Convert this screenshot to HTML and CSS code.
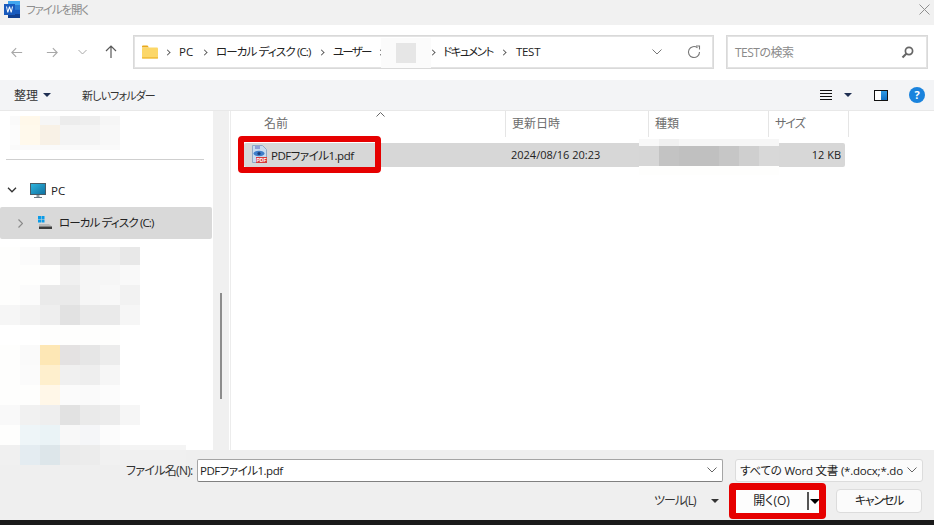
FILE: index.html
```html
<!DOCTYPE html>
<html lang="ja">
<head>
<meta charset="utf-8">
<title>ファイルを開く</title>
<link rel="stylesheet" href="styles.css">
</head>
<body>
<div class="dialog">
  <header class="titlebar">
    <svg class="word" width="16" height="17" viewBox="0 0 16 17">
      <rect x="4" y="0" width="12" height="17" fill="#41a5ee"/>
      <rect x="4" y="4" width="12" height="4.500" fill="#2b7cd3"/>
      <rect x="4" y="8.500" width="12" height="4.500" fill="#185abd"/>
      <rect x="4" y="13" width="12" height="4" fill="#103f91"/>
      <rect x="0" y="3" width="11" height="11" fill="#185abd"/>
      <path d="M2 5.500l1.300 6h1l1.200-4 1.200 4h1l1.300-6h-1l-.8 4-1.200-4h-1l-1.200 4-.8-4z" fill="#fff"/>
    </svg>
    <span class="title">ファイルを開く</span>
    <svg class="close" width="11" height="11" viewBox="0 0 11 11"><path d="M.5.500l10 10M10.500.500l-10 10" stroke="#8f8f8f" fill="none"/></svg>
  </header>

  <nav class="addressrow">
    <svg class="nav nav-back" width="12" height="11" viewBox="0 0 14 12"><path d="M13 6H1M6 1L1 6l5 5" stroke="#a8a8a8" stroke-width="1.300" fill="none"/></svg>
    <svg class="nav nav-fwd" width="12" height="11" viewBox="0 0 14 12"><path d="M1 6h12M8 1l5 5-5 5" stroke="#a8a8a8" stroke-width="1.300" fill="none"/></svg>
    <svg class="nav nav-down" width="9" height="6" viewBox="0 0 9 6"><path d="M.5 1l4 4 4-4" stroke="#a8a8a8" fill="none"/></svg>
    <svg class="nav nav-up" width="12" height="14" viewBox="0 0 12 14"><path d="M6 13V1M1 6l5-5 5 5" stroke="#5a5a5a" stroke-width="1.200" fill="none"/></svg>
    <div class="address">
      <svg class="folder" width="16" height="14" viewBox="0 0 16 14">
        <path d="M0 1.500A1 1 0 0 1 1 .500h4.500l1.500 2H0z" fill="#e9a91c"/>
        <rect x="0" y="2.500" width="16" height="11" rx="1" fill="#fcd768"/>
        <rect x="0" y="12.300" width="16" height="1.200" fill="#eeb52e"/>
      </svg>
      <span class="crumb-sep"></span><span class="crumb c-pc">PC</span>
      <span class="crumb-sep"></span><span class="crumb c-disk">ローカル ディスク (C:)</span>
      <span class="crumb-sep"></span><span class="crumb c-user">ユーザー</span>
      <span class="crumb-sep"></span><span class="crumb-gap"></span>
      <span class="crumb-sep"></span><span class="crumb c-doc">ドキュメント</span>
      <span class="crumb-sep"></span><span class="crumb c-test">TEST</span>
      <svg class="addr-drop" width="10" height="6" viewBox="0 0 10 6"><path d="M.5.500L5 5 9.500.500" stroke="#777" fill="none"/></svg>
      <svg class="refresh" width="14" height="14" viewBox="0 0 14 14"><path d="M12.500 7A5.500 5.500 0 1 1 10.500 2.800" stroke="#777" stroke-width="1.100" fill="none"/><path d="M9 .500h3.500V4" stroke="#777" stroke-width="1.100" fill="none" transform="translate(0 .5)"/></svg>
    </div>
    <div class="search">
      <span class="search-text">TESTの検索</span>
      <svg width="13" height="13" viewBox="0 0 13 13"><circle cx="8" cy="5" r="3.600" stroke="#666" stroke-width="1.700" fill="none"/><path d="M5.500 7.500L1.500 11.500" stroke="#666" stroke-width="2.200"/></svg>
    </div>
  </nav>

  <div class="toolbar">
    <span class="tool tool-org">整理</span>
    <span class="arrow arrow-navy"></span>
    <span class="tool tool-new">新しいフォルダー</span>
    <svg class="viewicon" width="12" height="10" viewBox="0 0 12 10"><path d="M0 .500h12M0 3.500h12M0 6.500h12M0 9.500h12" stroke="#111"/></svg>
    <span class="arrow arrow-navy arrow-view"></span>
    <span class="pane"><span class="pane-blue"></span></span>
    <span class="help">?</span>
  </div>

  <main class="content">
    <aside class="sidebar">
      <div class="side-top"><div class="divider"></div></div>
      <div class="tree-pc">
        <svg width="10" height="6" viewBox="0 0 10 6"><path d="M1 .800l4 4 4-4" stroke="#333" stroke-width="1.300" fill="none"/></svg>
        <svg class="monitor" width="16" height="15" viewBox="0 0 16 15"><defs><linearGradient id="scr" x1="0" y1="0" x2="1" y2="1"><stop offset="0" stop-color="#2fb7e0"/><stop offset="1" stop-color="#0f6f9f"/></linearGradient></defs><rect x=".5" y=".5" width="15" height="11" fill="url(#scr)" stroke="#4b5c66"/><rect x="6.500" y="12" width="3" height="2" fill="#8f9aa1"/><rect x="4" y="14" width="8" height="1" fill="#6b7780"/></svg>
        <span>PC</span>
      </div>
      <div class="tree-disk">
        <svg width="5" height="9" viewBox="0 0 5 9"><path d="M.5.500l4 4-4 4" stroke="#8a8a8a" stroke-width="1.200" fill="none"/></svg>
        <svg class="drive" width="15" height="13" viewBox="0 0 15 13"><rect x="0" y="0" width="3" height="3" fill="#0a9be8"/><rect x="3.500" y="0" width="3" height="3" fill="#0a9be8"/><rect x="0" y="3.500" width="3" height="3" fill="#0a9be8"/><rect x="3.500" y="3.500" width="3" height="3" fill="#0a9be8"/><path d="M1 8h10l3 2.500H1z" fill="#b9b9b9"/><rect x="1" y="10.500" width="13" height="2.500" fill="#3c3c3c"/></svg>
        <span class="disk-label">ローカル ディスク (C:)</span>
      </div>
    </aside>
    <div class="scrolltrack"><div class="thumb"></div></div>
    <section class="files">
      <div class="headers">
        <span class="col col-name">名前<svg class="sort" width="9" height="5" viewBox="0 0 9 5"><path d="M.5 4.500l4-4 4 4" stroke="#666" fill="none"/></svg></span>
        <span class="col col-date">更新日時</span>
        <span class="col col-type">種類</span>
        <span class="col col-size">サイズ</span>
      </div>
      <div class="filerow">
        <span class="cell cell-name">
          <svg class="pdficon" width="15" height="18" viewBox="0 0 15 18">
            <path d="M.5.500h10l4 4V17.500H.5z" fill="#c8dcef" stroke="#8fa9c6"/>
            <rect x="3" y="1" width="5" height="3" fill="#8e9fd6"/>
            <ellipse cx="7" cy="8.500" rx="5.500" ry="2.800" fill="#3f7ec9"/>
            <circle cx="7" cy="8.500" r="1.600" fill="#1d3f78"/>
            <rect x="4" y="12" width="11" height="6" fill="#d93a3a"/>
            <text x="9.500" y="16.700" class="pdftag" text-anchor="middle">PDF</text>
          </svg>
          <span class="file-label">PDFファイル1.pdf</span>
        </span>
        <span class="cell cell-date">2024/08/16 20:23</span>
        <span class="cell cell-type"></span>
        <span class="cell cell-size">12 KB</span>
      </div>
    </section>
  </main>

  <footer class="footer">
    <div class="frow frow-top">
      <label class="fname-label">ファイル名(N):</label>
      <div class="fname">
        <span class="file-label">PDFファイル1.pdf</span>
        <svg width="10" height="6" viewBox="0 0 10 6"><path d="M.5.500L5 5 9.500.500" stroke="#666" fill="none"/></svg>
      </div>
      <div class="ftype">
        <span>すべての Word 文書 (*.docx;*.do</span>
        <svg width="10" height="6" viewBox="0 0 10 6"><path d="M.5.500L5 5 9.500.500" stroke="#666" fill="none"/></svg>
      </div>
    </div>
    <div class="frow frow-bottom">
      <span class="tools">ツール(L)</span>
      <span class="arrow arrow-dark arrow-tools"></span>
      <div class="openbtn">
        <span class="open-label">開く(O)</span>
        <span class="open-split"></span>
        <span class="arrow arrow-black"></span>
      </div>
      <button class="cancel" type="button">キャンセル</button>
    </div>
  </footer>
  <div class="blackbar"></div>

  <div class="hl hl-file"></div>

  <div class="mosaic m-side1">
    <i class="fa"></i><i class="y4"></i><i class="f6"></i><i class="ec"></i><i class="ee"></i><i class="f6"></i>
    <i class="tall fc"></i><i class="tall y5"></i><i class="tall y6"></i><i class="tall f4"></i><i class="tall f4"></i><i class="tall f8"></i>
    <i class="low fa"></i><i class="low fa"></i><i class="low fa"></i><i class="low fa"></i><i class="low fa"></i><i class="low fa"></i>
  </div>

  <div class="mosaic m-side2">
    <i class="fe"></i><i class="fb"></i><i class="e8"></i><i class="dc"></i><i class="ea"></i><i class="ee"></i><i class="e8"></i>
    <i class="fe"></i><i class="fe"></i><i class="fe"></i><i class="f0"></i><i class="f6"></i><i class="f6"></i><i class="f9"></i>
    <i class="fe"></i><i class="fb"></i><i class="ea"></i><i class="ea"></i><i class="f6"></i><i class="f8"></i><i class="f2"></i>
    <i class="f6"></i><i class="f2"></i><i class="ee"></i><i class="e2"></i><i class="ea"></i><i class="ea"></i><i class="f6"></i>
    <i class="ff"></i><i class="ff"></i><i class="fe"></i><i class="fe"></i><i class="fe"></i><i class="fe"></i><i class="ff"></i>
    <i class="fe"></i><i class="fa"></i><i class="y1"></i><i class="e4"></i><i class="e6"></i><i class="ec"></i><i class="ff"></i>
    <i class="fe"></i><i class="fb"></i><i class="y2"></i><i class="f0"></i><i class="ee"></i><i class="f6"></i><i class="ff"></i>
    <i class="fe"></i><i class="fe"></i><i class="y3"></i><i class="fb"></i><i class="fa"></i><i class="fc"></i><i class="ff"></i>
    <i class="f9"></i><i class="f1"></i><i class="ee"></i><i class="e2"></i><i class="ea"></i><i class="ec"></i><i class="f6"></i>
    <i class="fe"></i><i class="b1"></i><i class="b2"></i><i class="f8"></i><i class="b3"></i><i class="fc"></i><i class="ff"></i>
  </div>
  <div class="m-foot">
    <i class="f0"></i><i class="b4"></i><i class="b5"></i><i class="eb"></i><i class="ec"></i><i class="f1"></i>
  </div>

  <div class="m-crumb"><span></span></div>

  <div class="m-type">
    <i class="f8"></i><i class="f0"></i><i class="f6"></i><i class="f6"></i><i class="f6"></i><i class="f6"></i><i class="f6"></i>
    <i class="d6"></i><i class="c3"></i><i class="c1"></i><i class="c1"></i><i class="c6"></i><i class="cf"></i><i class="d8"></i>
    <i class="fe"></i><i class="fe"></i><i class="fe"></i><i class="fe"></i><i class="fe"></i><i class="fe"></i><i class="fe"></i>
  </div>

  <div class="hl hl-open"></div>
</div>
</body>
</html>
```

FILE: styles.css
```css
* { box-sizing: border-box; }
html, body { margin: 0; padding: 0; }
body {
  width: 934px;
  height: 525px;
  overflow: hidden;
  font-family: "Open Sans", "Noto Sans CJK JP", sans-serif;
  font-size: 12px;
  color: #222;
  font-feature-settings: "palt";
}
.dialog {
  position: relative;
  width: 934px;
  height: 525px;
  display: flex;
  flex-direction: column;
  background: #fff;
  overflow: hidden;
}

/* title bar */
.titlebar {
  height: 25px;
  flex: none;
  display: flex;
  align-items: flex-start;
  background: #f1f1f1;
  padding: 1px 4px 0 4px;
}
.title { margin: 1px 0 0 6px; color: #8e8e8e; font-size: 11.500px; letter-spacing: -1.100px; line-height: 16px; }
.close { margin: 3px 0 0 auto; }

/* address row */
.addressrow {
  height: 55px;
  flex: none;
  display: flex;
  align-items: center;
  background: #fff;
  padding: 0 6px 1px 0;
}
.nav { flex: none; }
.nav-back { margin-left: 11px; }
.nav-fwd { margin-left: 23px; }
.nav-down { margin-left: 20px; }
.nav-up { margin-left: 18px; }
.address {
  width: 581px;
  height: 34px;
  margin-left: 16px;
  border: 1px solid #d9d9d9;
  outline: 1px solid #e3e3e3;
  outline-offset: -2px;
  display: flex;
  align-items: center;
  padding-left: 8px;
  flex: none;
}
.folder { flex: none; margin-right: 7px; }
.crumb-sep {
  flex: none;
  width: 5px;
  height: 5px;
  border-top: 1px solid #444;
  border-right: 1px solid #444;
  transform: rotate(45deg) scale(.85);
}
.crumb { white-space: nowrap; color: #222; font-size: 11.500px; flex: none; margin: 0 9px 2px; }
.c-pc { width: 14px; }
.c-disk { width: 94px; letter-spacing: -.85px; }
.c-user { width: 36px; letter-spacing: -1.800px; }
.crumb-gap { width: 47px; flex: none; }
.c-doc { width: 50px; margin: 0 8px 2px; letter-spacing: -1.500px; }
.c-test { margin-left: 10px; letter-spacing: -.3px; }
.addr-drop { margin: 0 25px 0 auto; flex: none; }
.refresh { margin-right: 12px; flex: none; }
.search {
  width: 202px;
  height: 34px;
  margin-left: 12px;
  border: 1px solid #d9d9d9;
  outline: 1px solid #e3e3e3;
  outline-offset: -2px;
  display: flex;
  align-items: center;
  justify-content: space-between;
  padding: 0 13px 0 8px;
  flex: none;
}
.search-text { color: #8a8a8a; letter-spacing: -.5px; }

/* toolbar */
.toolbar {
  height: 31px;
  flex: none;
  background: #f3f4f6;
  border-bottom: 1px solid #e8e8e8;
  display: flex;
  align-items: center;
  padding: 0 9px 0 14px;
}
.tool { color: #333; font-size: 12px; white-space: nowrap; }
.tool-org { width: 28px; }
.tool-new { margin-left: 31px; width: 75px; font-size: 11px; letter-spacing: -.85px; }
.arrow {
  display: block;
  flex: none;
  width: 0;
  height: 0;
  border-left: 4px solid transparent;
  border-right: 4px solid transparent;
  border-top: 4px solid #333;
}
.arrow-navy { border-top-color: #1f2f52; margin-left: 1px; }
.viewicon { margin-left: auto; flex: none; }
.arrow-view { margin-left: 12px; }
.pane {
  width: 14px;
  height: 11px;
  margin-left: 22px;
  border: 1px solid #111;
  background: #fff;
  display: flex;
  justify-content: flex-end;
  flex: none;
}
.pane-blue { width: 6px; background: linear-gradient(#2f9be6, #1170c4); }
.help {
  width: 16px;
  height: 16px;
  margin-left: 21px;
  border-radius: 50%;
  background: #1a83dd;
  color: #fff;
  font-size: 11px;
  font-weight: 700;
  line-height: 16px;
  text-align: center;
  flex: none;
}

/* main */
.content { flex: 1; display: flex; min-height: 0; }
.sidebar { width: 213px; flex: none; background: #fff; }
.side-top { height: 49px; position: relative; display: flex; align-items: flex-end; padding-left: 6px; }
.divider { width: 198px; height: 1px; background: #cfcfcf; }
.tree-pc {
  height: 47px;
  display: flex;
  align-items: center;
  padding-left: 7px;
  padding-top: 13px;
  color: #222;
  font-size: 11.500px;
}
.monitor { margin: 0 5px 0 13px; }
.tree-disk {
  height: 32px;
  margin-right: 1px;
  background: #d9d9d9;
  border-radius: 2px;
  display: flex;
  align-items: center;
  padding-left: 18px;
  color: #222;
  white-space: nowrap;
}
.disk-label { font-size: 11.500px; letter-spacing: -.85px; margin-bottom: 2px; }
.drive { margin: -1px 6px 0 15px; flex: none; }
.scrolltrack {
  width: 16px;
  flex: none;
  background: #f0f0f0;
  position: relative;
  display: flex;
  justify-content: center;
  padding-top: 182px;
}
.thumb { width: 2px; height: 106px; background: #8c8c8c; }
.files {
  flex: 1;
  min-width: 0;
  border-left: 1px solid #ececec;
  margin-left: 1px;
  background: #fff;
}
.headers { height: 26px; display: flex; }
.col {
  display: flex;
  align-items: center;
  border-right: 1px solid #e5e5e5;
  color: #6d6d6d;
  padding-left: 6px;
  padding-bottom: 2px;
  position: relative;
  flex: none;
  height: 26px;
}
.col-name { width: 275px; padding-left: 33px; }
.col-date { width: 143px; }
.col-type { width: 120px; }
.col-size { width: 80px; letter-spacing: -1px; }
.sort { position: absolute; left: 145px; top: 1px; }
.filerow {
  height: 24px;
  margin: 6px 0 0 13px;
  width: 601px;
  display: flex;
  align-items: center;
  background: #d7d7d7;
  border-radius: 2px;
  padding-bottom: 1px;
}
.cell { flex: none; white-space: nowrap; color: #222; }
.cell-name { width: 267px; display: flex; align-items: center; gap: 4px; padding-left: 8px; }
.file-label { font-size: 11.500px; letter-spacing: -.5px; position: relative; z-index: 2; }
.pdftag { font-size: 5px; font-weight: 700; fill: #fff; font-family: "Liberation Sans", sans-serif; }
.pdficon { margin-top: -1px; position: relative; z-index: 2; }
.cell-date { width: 130px; font-size: 11px; }
.cell-type { width: 140px; }
.cell-size { width: 60px; text-align: right; font-size: 11px; }

/* footer */
.footer {
  height: 70px;
  flex: none;
  background: #efefef;
  display: flex;
  flex-direction: column;
  padding-top: 9px;
}
.frow { display: flex; align-items: center; flex: none; }
.frow-top { height: 23px; padding-left: 126px; }
.fname-label { width: 71px; color: #333; white-space: nowrap; font-size: 12px; letter-spacing: -.7px; padding-bottom: 1px; }
.fname {
  width: 526px;
  height: 23px;
  background: #fff;
  border: 1px solid #a5a5a5;
  border-bottom-color: #808080;
  border-radius: 2px;
  display: flex;
  align-items: center;
  justify-content: space-between;
  padding: 0 5px 1px 2px;
  color: #222;
  flex: none;
}
.ftype {
  width: 188px;
  height: 23px;
  margin-left: 12px;
  background: #fbfbfb;
  border: 1px solid #dcdcdc;
  border-radius: 3px;
  display: flex;
  align-items: center;
  justify-content: space-between;
  padding: 0 5px 1px 4px;
  color: #222;
  white-space: nowrap;
  flex: none;
}
.ftype span { font-size: 11.500px; letter-spacing: -.22px; }
.ftype svg { flex: none; }
.frow-bottom { height: 24px; margin-top: 7px; padding-left: 654px; }
.tools { width: 42px; color: #333; white-space: nowrap; letter-spacing: -1px; padding-bottom: 2px; }
.arrow-dark { margin-left: 15px; }
.openbtn {
  width: 84px;
  height: 24px;
  margin-left: 17px;
  background: #fdfdfd;
  display: flex;
  align-items: center;
  flex: none;
}
.open-label { width: 72px; text-align: center; color: #222; padding-bottom: 2px; }
.open-split { width: 2px; height: 18px; background: #555; flex: none; }
.arrow-black { border-top-color: #000; border-left-width: 5px; border-right-width: 5px; border-top-width: 5px; margin-left: 1px; }
.cancel {
  width: 86px;
  height: 24px;
  margin-left: 16px;
  background: #fbfbfb;
  border: 1px solid #dcdcdc;
  border-radius: 4px;
  font: inherit;
  letter-spacing: -1.200px;
  color: #222;
  padding: 0 0 2px;
}
.blackbar { height: 5px; flex: none; background: #1a1a1a; }

/* red annotation boxes */
.hl { position: absolute; border: 6px solid #e60000; border-radius: 4px; pointer-events: none; }
.hl-file { left: 238px; top: 136px; width: 143px; height: 37px; }
.hl-open { left: 729px; top: 483px; width: 97px; height: 36px; border-width: 7px 7px 6px 7px; }

/* pixelated redactions */
.mosaic, .m-foot, .m-type { position: absolute; display: grid; }
.mosaic i, .m-foot i, .m-type i { display: block; }
.m-side1 { left: 10px; top: 116px; grid-template-columns: 10px repeat(5, 20px); grid-template-rows: 9px 20px 5px; }
.m-side2 { left: 0; top: 247px; grid-template-columns: repeat(7, 20px); grid-template-rows: 18px repeat(9, 20px); }
.m-foot { left: 0; top: 445px; width: 186px; height: 20px; background: linear-gradient(#f4f4f4 5px, #f0f0f0 5px); grid-template-columns: repeat(6, 20px); }
.m-crumb { position: absolute; left: 381px; top: 38px; width: 50px; height: 30px; background: #fbfbfb; display: flex; align-items: center; justify-content: center; }
.m-crumb span { display: block; width: 20px; height: 20px; background: #e6e6e6; }
.m-type { left: 639px; top: 139px; grid-template-columns: repeat(7, 20px); grid-template-rows: 7px 20px 9px; }

.ff { background: #fff; } .fe { background: #fefefd; } .fc { background: #fcfcfc; } .fb { background: #fbfbfb; }
.fa { background: #fafafa; } .f9 { background: #f9f9f9; } .f8 { background: #f8f8f8; } .f6 { background: #f6f6f6; }
.f4 { background: #f4f4f4; } .f2 { background: #f2f2f2; } .f1 { background: #f1f1f1; } .f0 { background: #f0f0f0; }
.ee { background: #eeeeee; } .ec { background: #ececec; } .eb { background: #ebebeb; } .ea { background: #eaeaea; }
.e8 { background: #e8e8e8; } .e6 { background: #e6e6e6; } .e4 { background: #e4e2e2; } .e2 { background: #e2e2e2; }
.dc { background: #dcdcdc; } .d8 { background: #d8d8d8; } .d6 { background: #d6d6d6; } .cf { background: #cfcfcf; }
.c6 { background: #c6c6c6; } .c3 { background: #c3c3c3; } .c1 { background: #c0c0c0; }
.y1 { background: #fde7b5; } .y2 { background: #feefcd; } .y3 { background: #fff7e8; }
.y4 { background: #fff8ea; } .y5 { background: #fff9ec; } .y6 { background: #f8f1e6; }
.b1 { background: #eef5f8; } .b2 { background: #eaf3f6; } .b3 { background: #f5f6f8; }
.b4 { background: #e4ecf1; } .b5 { background: #dde6ea; }
```
